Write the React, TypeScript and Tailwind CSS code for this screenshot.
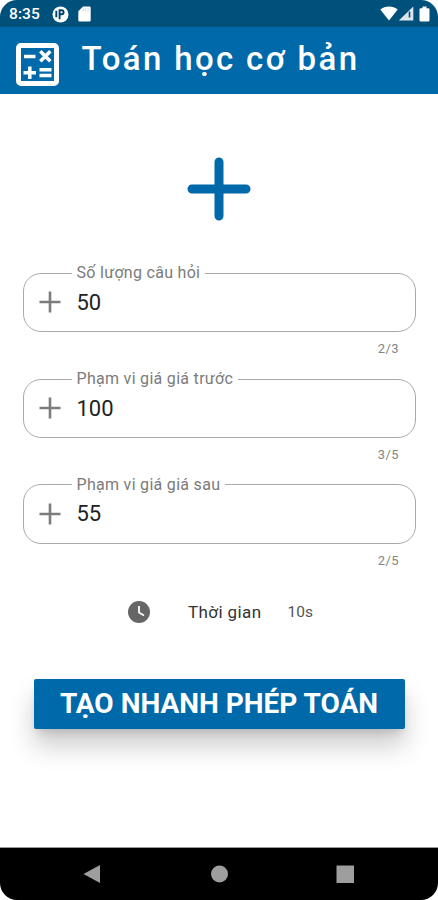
import React from "react";

type FieldProps = { label: string; value: string; counter: string };

function Field({ label, value, counter }: FieldProps) {
  return (
    <div className="h-[105.8px] pl-[22.5px] pr-[22px]">
      <fieldset className="h-[69px] rounded-[18px] border border-[#a9a9a9] pl-[48px]">
        <legend className="h-[20px] whitespace-nowrap px-[5px] text-[16px] leading-[20px] tracking-[0.3px] text-[#7b7b7b]">
          {label}
        </legend>
        <div className="-ml-[33px] flex h-[38px] items-center">
          <svg className="h-[22px] w-[22px] shrink-0" viewBox="0 0 22 22" fill="none" stroke="#7c7c7c" strokeWidth="2.6">
            <path d="M11 .5v21M.5 11h21" />
          </svg>
          <span className="ml-[16px] pt-px text-[22px] leading-[26px] text-[#222]">{value}</span>
        </div>
      </fieldset>
      <div className="mt-[8px] pr-[17px] text-right text-[13px] leading-[18px] tracking-[0.4px] text-[#858585]">{counter}</div>
    </div>
  );
}

export default function App() {
  return (
    <div className="flex h-[900px] w-[438px] flex-col overflow-hidden rounded-[17px] bg-white font-[Roboto,'Noto_Sans',sans-serif]">
      <div className="flex h-[27px] shrink-0 items-center bg-[#00507c] pl-[9px] text-white">
        <span className="w-[43px] pt-px text-[15.5px] font-medium leading-[20px] tracking-[0.1px]">8:35</span>
        <svg className="mt-px h-[17px] w-[17px]" viewBox="0 0 17 17">
          <circle cx="8.5" cy="8.5" r="8" fill="#fff" />
          <path d="M4.300 4.800v6.400M7.600 13.200V4.300h2a2 2 0 010 4H7.600" fill="none" stroke="#00406e" strokeWidth="1.900" />
        </svg>
        <svg className="ml-[9px] mt-px h-[16px] w-[13px]" viewBox="0 0 13 16">
          <path d="M5 .5h6.500a1.200 1.200 0 011.200 1.200v12.600a1.200 1.200 0 01-1.200 1.200h-10A1.200 1.200 0 01.3 14.300V5.200z" fill="#fff" />
          <path d="M5.300 2.200v3M7.700 2.200v3M10.100 2.200v3" stroke="#b5cbd8" strokeWidth=".8" />
        </svg>
        <div className="ml-auto mr-[8px] flex items-center">
          <svg className="h-[15px] w-[18px]" viewBox="0 0 18 15">
            <path d="M.3 3.600C5-.6 13-.6 17.700 3.600L9 14.500z" fill="#fff" />
          </svg>
          <svg className="h-[15px] w-[16px]" viewBox="0 0 16 15">
            <path d="M.8 14.500L15.300.5v14z" fill="#dce6ee" />
            <path d="M11.500 5.500v6" stroke="#00507c" strokeWidth="1.600" />
          </svg>
          <svg className="ml-[5px] h-[16px] w-[11px]" viewBox="0 0 11 16">
            <path d="M3.500.5h4v1.700h1.800a1.200 1.200 0 011.200 1.200v10.800a1.200 1.200 0 01-1.200 1.200H1.700a1.200 1.200 0 01-1.200-1.200V3.400a1.200 1.200 0 011.200-1.200h1.800z" fill="#fff" />
          </svg>
        </div>
      </div>

      <header className="flex h-[66.5px] shrink-0 bg-[#0069aa] pl-[16px] text-white">
        <svg className="mt-[15.5px] h-[43px] w-[43px] shrink-0" viewBox="0 0 43 43" fill="none" stroke="#fff">
          <rect x="2.500" y="2.500" width="38" height="38" rx="2.500" strokeWidth="5" />
          <path d="M8 13.500h11.500M7.500 29.700h12.500M13.800 23.500v12.500M23.500 26.800h12M23.500 32.500h12" strokeWidth="3.500" />
          <path d="M24.300 8.200l10 10M34.300 8.200l-10 10" strokeWidth="3.500" />
        </svg>
        <h1 className="ml-[22.5px] mt-[12px] whitespace-nowrap text-[33px] font-medium leading-[40px] tracking-[2.35px]">Toán học cơ bản</h1>
      </header>

      <main className="flex min-h-0 grow flex-col">
        <svg className="ml-[187px] mt-[63px] h-[64px] w-[64px] shrink-0" viewBox="0 0 64 64" stroke="#0069aa" strokeWidth="9" strokeLinecap="round">
          <path d="M32 5v54M5 32h54" />
        </svg>

        <div className="mt-[42.8px]">
          <Field label="Số lượng câu hỏi" value="50" counter="2/3" />
          <Field label="Phạm vi giá giá trước" value="100" counter="3/5" />
          <Field label="Phạm vi giá giá sau" value="55" counter="2/5" />
        </div>

        <div className="mt-[19.3px] flex h-[24px] items-center pl-[128px] text-[#333]">
          <svg className="h-[22px] w-[22px]" viewBox="0 0 22 22">
            <circle cx="11" cy="11" r="11" fill="#666" />
            <path d="M11 5v6.500l5 3" fill="none" stroke="#fff" strokeWidth="1.800" />
          </svg>
          <span className="ml-[38px] w-[99.5px] text-[17px] leading-[22px] tracking-[0.4px]">Thời gian</span>
          <span className="text-[15.5px] leading-[22px] text-[#555]">10s</span>
        </div>

        <button className="ml-[34px] mt-[55px] h-[50px] w-[371px] shrink-0 whitespace-nowrap rounded-[2px] bg-[#0069aa] pr-px text-[28px] font-bold leading-[50px] text-white shadow-[0_17px_26px_0_rgba(0,0,0,0.2),0_6px_8px_-3px_rgba(0,0,0,0.13)]">
          TẠO NHANH PHÉP TOÁN
        </button>
      </main>

      <nav className="h-[53px] shrink-0 border-t border-[#999] bg-black">
        <svg className="h-[52px] w-[438px]" viewBox="0 0 438 52" fill="#9e9e9e">
          <path d="M83.500 26L100 17v18z" />
          <circle cx="219.500" cy="26" r="8.500" />
          <rect x="336.500" y="17.500" width="17.500" height="17.500" rx=".5" />
        </svg>
      </nav>
    </div>
  );
}
